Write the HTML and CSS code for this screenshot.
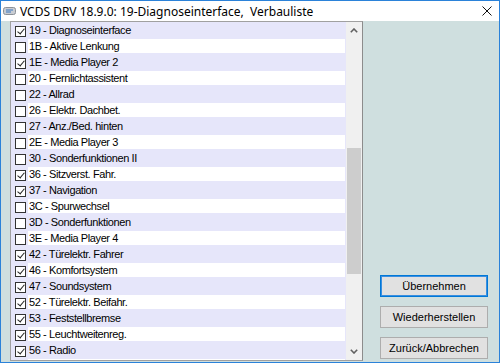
FILE: index.html
```html
<!DOCTYPE html>
<html lang="de">

<head>
    <meta charset="UTF-8">
    <title>VCDS DRV 18.9.0: 19-Diagnoseinterface, Verbauliste</title>
    <link rel="stylesheet" href="styles.css">
</head>

<body>
    <div class="window">
        <div class="titlebar">
            <svg class="app-icon" width="13" height="10" viewBox="0 0 13 10">
                <rect x="0.5" y="1.5" width="12" height="7" rx="2" fill="#c8ccd2" stroke="#8a9098" />
                <path d="M3 4h7M3 6h5" stroke="#3a78c2" stroke-width="1" />
            </svg>
            <span class="title">VCDS DRV 18.9.0: 19-Diagnoseinterface,&nbsp; Verbauliste</span>
            <svg class="close" width="10" height="10" viewBox="0 0 10 10">
                <path d="M0.5 0.5L9.5 9.5M9.5 0.5L0.5 9.5" stroke="#111" stroke-width="1" />
            </svg>
        </div>

        <div class="client">
            <div class="listbox">
                <ul class="rows">
                    <li class="row checked"><span class="box"></span><span class="label">19 - Diagnoseinterface</span></li>
                    <li class="row"><span class="box"></span><span class="label">1B - Aktive Lenkung</span></li>
                    <li class="row checked"><span class="box"></span><span class="label">1E - Media Player 2</span></li>
                    <li class="row"><span class="box"></span><span class="label">20 - Fernlichtassistent</span></li>
                    <li class="row"><span class="box"></span><span class="label">22 - Allrad</span></li>
                    <li class="row"><span class="box"></span><span class="label">26 - Elektr. Dachbet.</span></li>
                    <li class="row"><span class="box"></span><span class="label">27 - Anz./Bed. hinten</span></li>
                    <li class="row"><span class="box"></span><span class="label">2E - Media Player 3</span></li>
                    <li class="row"><span class="box"></span><span class="label">30 - Sonderfunktionen II</span></li>
                    <li class="row checked"><span class="box"></span><span class="label">36 - Sitzverst. Fahr.</span></li>
                    <li class="row checked"><span class="box"></span><span class="label">37 - Navigation</span></li>
                    <li class="row"><span class="box"></span><span class="label">3C - Spurwechsel</span></li>
                    <li class="row"><span class="box"></span><span class="label">3D - Sonderfunktionen</span></li>
                    <li class="row"><span class="box"></span><span class="label">3E - Media Player 4</span></li>
                    <li class="row checked"><span class="box"></span><span class="label">42 - Türelektr. Fahrer</span></li>
                    <li class="row checked"><span class="box"></span><span class="label">46 - Komfortsystem</span></li>
                    <li class="row checked"><span class="box"></span><span class="label">47 - Soundsystem</span></li>
                    <li class="row checked"><span class="box"></span><span class="label">52 - Türelektr. Beifahr.</span></li>
                    <li class="row checked"><span class="box"></span><span class="label">53 - Feststellbremse</span></li>
                    <li class="row checked"><span class="box"></span><span class="label">55 - Leuchtweitenreg.</span></li>
                    <li class="row checked"><span class="box"></span><span class="label">56 - Radio</span></li>
                    <li class="row checked"><span class="box"></span><span class="label"></span></li>
                </ul>
                <div class="scrollbar">
                    <div class="arrow">
                        <svg width="8" height="5" viewBox="0 0 8 5">
                            <path d="M0.8 4.2L4 1L7.2 4.2" fill="none" stroke="#606060" stroke-width="1.6" />
                        </svg>
                    </div>
                    <div class="track">
                        <div class="thumb"></div>
                    </div>
                    <div class="arrow">
                        <svg width="8" height="5" viewBox="0 0 8 5">
                            <path d="M0.8 0.8L4 4L7.2 0.8" fill="none" stroke="#606060" stroke-width="1.6" />
                        </svg>
                    </div>
                </div>
            </div>

            <div class="buttons">
                <button class="btn default">Übernehmen</button>
                <button class="btn">Wiederherstellen</button>
                <button class="btn">Zurück/Abbrechen</button>
            </div>
        </div>
    </div>
</body>

</html>
```

FILE: styles.css
```css
* {
    box-sizing: border-box;
}

body {
    margin: 0;
    font-family: 'Liberation Sans', Arial, sans-serif;
    color: #000;
}

.window {
    width: 500px;
    height: 363px;
    border: 1px solid #2b82d9;
    display: flex;
    flex-direction: column;
}

.titlebar {
    height: 20px;
    background: #fff;
    display: flex;
    align-items: center;
    padding: 0 7px 0 2px;
}

.app-icon {
    margin-right: 4px;
}

.title {
    flex: 1;
    font-family: 'Noto Sans', sans-serif;
    font-size: 12px;
    white-space: nowrap;
}

.client {
    flex: 1;
    background: #cfdfdf;
    display: flex;
    padding: 0 0 0 9px;
}

.listbox {
    width: 353px;
    height: 340px;
    border: 1px solid #a0a0a0;
    border-right-color: #8c8c8c;
    display: flex;
}

.rows {
    flex: 1;
    margin: 0;
    padding: 0;
    list-style: none;
    background: #e6e6fa;
    overflow: hidden;
}

.row {
    height: 16px;
    display: flex;
    align-items: flex-start;
    font-size: 11px;
    letter-spacing: -0.4px;
}

.box {
    position: relative;
    width: 11px;
    height: 11px;
    margin: 4px 2px 0 4px;
    border: 1px solid #333;
    background: #fff;
    flex-shrink: 0;
}

.checked .box::after {
    content: '';
    position: absolute;
    left: 3px;
    top: 0;
    width: 3px;
    height: 6px;
    border-right: 1.5px solid #222;
    border-bottom: 1.5px solid #222;
    transform: rotate(40deg);
}

.label {
    flex: 1;
    height: 14px;
    margin: 1px 1px 0 0;
    padding-left: 1px;
    line-height: 14px;
    white-space: nowrap;
}

.row:nth-child(even) .label {
    background: #fff;
}

.scrollbar {
    width: 16px;
    background: #f0f0f0;
    display: flex;
    flex-direction: column;
}

.arrow {
    height: 17px;
    display: flex;
    align-items: center;
    justify-content: center;
}

.track {
    flex: 1;
}

.thumb {
    height: 126px;
    margin: 109px 1px 0 1px;
    background: #cdcdcd;
}

.buttons {
    display: flex;
    flex-direction: column;
    justify-content: flex-end;
    gap: 9px;
    margin-left: 17px;
    padding-bottom: 3px;
}

.btn {
    width: 108px;
    height: 22px;
    padding: 0;
    background: #e1e1e1;
    border: 1px solid #adadad;
    font-family: 'Liberation Sans', Arial, sans-serif;
    font-size: 11px;
    color: #000;
}

.btn.default {
    border-color: #0078d7;
    box-shadow: inset 0 0 0 1px #3a8fe0;
}
```
